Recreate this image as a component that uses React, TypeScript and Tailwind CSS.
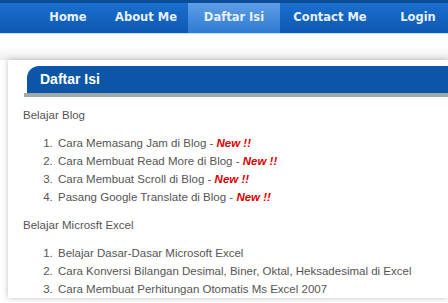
import React from "react";

const blog = [
  "Cara Memasang Jam di Blog",
  "Cara Membuat Read More di Blog",
  "Cara Membuat Scroll di Blog",
  "Pasang Google Translate di Blog",
];
const excel = [
  "Belajar Dasar-Dasar Microsoft Excel",
  "Cara Konversi Bilangan Desimal, Biner, Oktal, Heksadesimal di Excel",
  "Cara Membuat Perhitungan Otomatis Ms Excel 2007",
];

const navItems = [
  { label: "Home", w: "w-[72px]", ml: "ml-[32px]" },
  { label: "About Me", w: "w-[84px]", ml: "" },
  { label: "Daftar Isi", w: "w-[92px]", ml: "", active: true },
  { label: "Contact Me", w: "w-[100px]", ml: "" },
  { label: "Login", w: "w-[76px]", ml: "" },
];

export default function App() {
  return (
    <div className="w-[448px] h-[303px] overflow-hidden bg-white" style={{ fontFamily: "'Liberation Sans', Arial, sans-serif" }}>
      <div className="h-[3px] bg-[#0a4c98]" />
      <div className="h-[30px] flex bg-gradient-to-b from-[#1b6fcf] to-[#0c58b0]">
        {navItems.map((n) => (
          <div
            key={n.label}
            className={`${n.w} ${n.ml} shrink-0 flex items-center justify-center font-bold text-[#e6f0ff] ${n.active ? "bg-gradient-to-b from-[#5c9ee6] to-[#2f7ad3]" : ""}`}
            style={{ fontFamily: "'DejaVu Sans', Verdana, sans-serif", fontSize: "11.5px" }}
          >
            {n.label}
          </div>
        ))}
      </div>
      <div className="h-[1px] bg-[#bfe4ff]" />
      <div className="h-[26px] bg-gradient-to-b from-white via-white to-[#ececec]" />
      <div className="ml-[8px] bg-white shadow-[0_0_6px_rgba(0,0,0,0.25)] pt-[6px]">
        <div className="relative h-[32px]">
          <div className="absolute left-[19px] right-0 top-0 h-[27px] bg-[#0d55a6] rounded-tl-[12px] flex items-center pl-[13px]">
            <span className="text-white font-bold text-[14px]">Daftar Isi</span>
          </div>
          <div className="absolute left-[16px] right-0 top-[27px] h-[4px] bg-[#9eaca9]" />
        </div>
        <div className="pl-[15px] text-[11.5px] text-[#555] leading-[18px]">
          <div className="pt-[8px]">Belajar Blog</div>
          <ol className="mt-[10px] mb-[10px] pl-[33px] list-decimal">
            {blog.map((t) => (
              <li key={t} className="pl-[2px]">
                {t} - <span className="text-[#e00000] font-bold italic">New !!</span>
              </li>
            ))}
          </ol>
          <div>Belajar Microsft Excel</div>
          <ol className="mt-[10px] pl-[33px] list-decimal">
            {excel.map((t) => (
              <li key={t} className="pl-[2px]">{t}</li>
            ))}
          </ol>
        </div>
      </div>
    </div>
  );
}
